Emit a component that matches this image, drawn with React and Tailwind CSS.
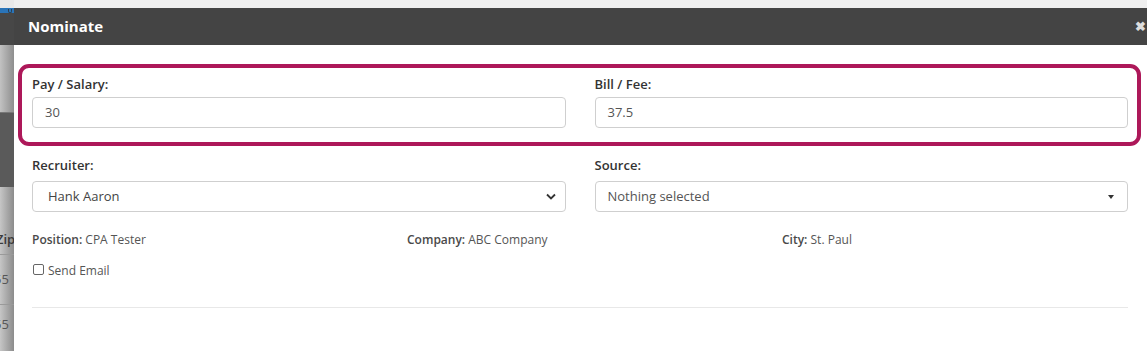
import { useState } from "react";

const font = { fontFamily: '"Open Sans", "Noto Sans", sans-serif' };

const BackdropStrip = () => (
  <div className="w-[14px] shrink-0 flex flex-col overflow-hidden text-[13px] leading-none">
    <div className="h-[8px] bg-[#e9e9e9]" />
    <div className="h-[5px] bg-[#2a74b8] relative">
      <span className="absolute right-[2px] top-[1px] w-[4px] h-[4px] border-b border-x border-[#2c3e50] rounded-b-sm" />
    </div>
    <div className="h-[32px] bg-[#474747]" />
    <div className="h-[68px] bg-gradient-to-r from-[#c2c2c2] to-[#8e8e8e] border-b border-[#777]" />
    <div className="h-[74px] bg-[#5a5a5a]" />
    <div className="flex-1 bg-gradient-to-r from-[#c6c6c6] to-[#8c8c8c] text-[#3a3a3a]">
      <div className="h-[67px] flex items-end pb-[8px] -ml-[4px] font-semibold">Zip</div>
      <div className="h-[50px] flex items-center -ml-[6px] border-t border-[#9a9a9a] text-[#555]">55</div>
      <div className="h-[40px] flex items-center -ml-[6px] border-t border-[#9a9a9a] text-[#555]">55</div>
    </div>
  </div>
);

const Field = ({ label, gap = "mb-[4px]", children }) => (
  <div>
    <label className={`block text-[13px] leading-[18px] font-semibold text-[#333] ${gap}`}>{label}</label>
    {children}
  </div>
);

const TextInput = ({ value }) => (
  <div className="h-[31px] border border-[#cfcfcf] rounded-[4px] px-[12px] flex items-center text-[13px] text-[#555]">
    {value}
  </div>
);

const Info = ({ label, value }) => (
  <div className="px-[15px] text-[12px] text-[#555]">
    <span className="font-semibold text-[#4a4a4a]">{label}</span> {value}
  </div>
);

export default function App() {
  const [sendEmail, setSendEmail] = useState(false);

  return (
    <div className="h-[351px] w-[1147px] flex overflow-hidden bg-white" style={font}>
      <BackdropStrip />
      <div className="flex-1 flex flex-col">
        <div className="h-[8px] bg-[#efefef]" />
        <div className="flex-1 bg-white flex flex-col">
          <div className="h-[37px] bg-[#444] flex items-center justify-between pl-[14px] pr-[1px]">
            <h4 className="text-white font-bold text-[15px]">Nominate</h4>
            <span className="text-[#ddd] font-bold text-[13px] leading-none">✖</span>
          </div>

          <div className="pt-[19px] pl-[18px] pr-[19px]">
            <div className="-ml-[14px] -mr-[13px] border-[4px] border-[#ad1859] rounded-[11px] pt-[7px] pl-[10px] pr-[9px] pb-[14px]">
              <div className="grid grid-cols-2 gap-x-[29px]">
                <Field label="Pay / Salary:">
                  <TextInput value="30" />
                </Field>
                <Field label="Bill / Fee:">
                  <TextInput value="37.5" />
                </Field>
              </div>
            </div>

            <div className="grid grid-cols-2 gap-x-[29px] mt-[10px]">
              <Field label="Recruiter:" gap="mb-[7px]">
                <div className="h-[31px] border border-[#cfcfcf] rounded-[4px] pl-[15px] pr-[9px] flex items-center justify-between text-[13px] text-[#444]">
                  <span>Hank Aaron</span>
                  <svg width="10" height="7" viewBox="0 0 10 7" fill="none">
                    <path d="M1 1.5l4 4 4-4" stroke="#333" strokeWidth="1.8" />
                  </svg>
                </div>
              </Field>
              <Field label="Source:" gap="mb-[7px]">
                <div className="h-[31px] border border-[#cfcfcf] rounded-[4px] pl-[12px] pr-[13px] flex items-center justify-between text-[13px] text-[#555]">
                  <span>Nothing selected</span>
                  <span className="w-0 h-0 border-x-[3.5px] border-x-transparent border-t-[4px] border-t-[#333]" />
                </div>
              </Field>
            </div>

            <div className="grid grid-cols-[375px_375px_1fr] -mx-[15px] mt-[19px] leading-[18px]">
              <Info label="Position:" value="CPA Tester" />
              <Info label="Company:" value="ABC Company" />
              <Info label="City:" value="St. Paul" />
            </div>

            <label className="flex items-center gap-[4px] mt-[13px] text-[12px] text-[#555] leading-[18px]">
              <input
                type="checkbox"
                checked={sendEmail}
                onChange={(e) => setSendEmail(e.target.checked)}
                className="w-[11px] h-[11px] ml-[1px] -mt-[4px] appearance-none border border-[#666] rounded-[2px] bg-white"
              />
              Send Email
            </label>

            <hr className="mt-[27px] border-t border-[#e8e8e8]" />
          </div>
        </div>
      </div>
    </div>
  );
}
